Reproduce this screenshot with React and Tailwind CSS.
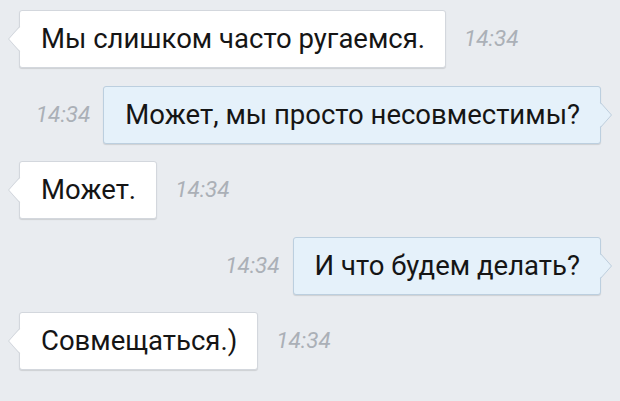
import React from 'react';

const messages = [
  { text: 'Мы слишком часто ругаемся.', out: false },
  { text: 'Может, мы просто несовместимы?', out: true },
  { text: 'Может.', out: false },
  { text: 'И что будем делать?', out: true },
  { text: 'Совмещаться.)', out: false },
];

const Tail = ({ out }) => {
  const fill = out ? '#e5f1fa' : '#ffffff';
  const stroke = out ? '#bccfdf' : '#d3d7dd';
  if (out) {
    return (
      <svg width="14" height="26" viewBox="0 0 14 26" className="absolute right-[-13px] top-1/2 -translate-y-1/2">
        <polygon points="0,0 12,13 0,26" fill={fill} />
        <polyline points="1,0 12.5,13 1,26" fill="none" stroke={stroke} strokeWidth="1" />
      </svg>
    );
  }
  return (
    <svg width="14" height="26" viewBox="0 0 14 26" className="absolute left-[-13px] top-1/2 -translate-y-1/2">
      <polygon points="14,0 2,13 14,26" fill={fill} />
      <polyline points="13,0 1.5,13 13,26" fill="none" stroke={stroke} strokeWidth="1" />
    </svg>
  );
};

const Time = () => (
  <span className="text-[22.5px] italic text-[#abb0b7] font-['Roboto',sans-serif]">14:34</span>
);

const Bubble = ({ text, out }) => (
  <div
    className={`relative h-[58px] flex items-center pl-[21px] pr-[20px] rounded-[3px] border shadow-[0_1px_1px_rgba(0,0,0,0.12)] ${
      out ? 'bg-[#e5f1fa] border-[#bccfdf]' : 'bg-white border-[#d3d7dd]'
    }`}
  >
    <span className="text-[27.5px] text-[#151515] font-['Roboto',sans-serif] whitespace-nowrap">{text}</span>
    <Tail out={out} />
  </div>
);

export default function App() {
  return (
    <div className="w-[620px] h-[401px] bg-[#e9ecf0] flex flex-col gap-[17.5px] pt-[10px] overflow-hidden">
      {messages.map((m, i) =>
        m.out ? (
          <div key={i} className="flex items-center justify-end gap-[13px] pr-[19px]">
            <Time />
            <Bubble text={m.text} out />
          </div>
        ) : (
          <div key={i} className="flex items-center gap-[18px] pl-[19px]">
            <Bubble text={m.text} />
            <Time />
          </div>
        )
      )}
    </div>
  );
}
